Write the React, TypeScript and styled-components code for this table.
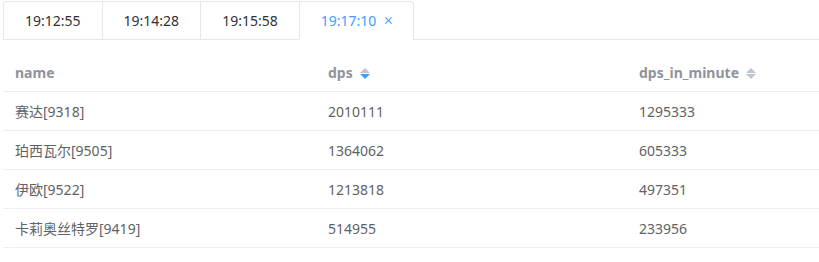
import React, { useState } from "react";
import styled, { createGlobalStyle } from "styled-components";

const GlobalStyle = createGlobalStyle`
  html, body {
    margin: 0;
    padding: 0;
    background: #fff;
    overflow: hidden;
  }
  body {
    font-family: "Noto Sans", "Noto Sans CJK SC", sans-serif;
    font-size: 14px;
    -webkit-font-smoothing: antialiased;
  }
`;

const Page = styled.div`
  padding: 1px 0 0 3px;
`;

const TabsHeader = styled.div`
  display: flex;
  border-bottom: 1px solid #e4e7ed;
  margin-bottom: 14px;
`;

const TabsNav = styled.div`
  display: flex;
  border: 1px solid #e4e7ed;
  border-bottom: none;
  border-radius: 4px 4px 0 0;
  margin-bottom: -1px;
`;

const Tab = styled.div<{ $active?: boolean; $first?: boolean }>`
  display: flex;
  align-items: center;
  height: 37px;
  padding: 0 21px;
  border-left: ${(p) => (p.$first ? "none" : "1px solid #e4e7ed")};
  border-bottom: 1px solid ${(p) => (p.$active ? "#fff" : "transparent")};
  color: ${(p) => (p.$active ? "#409eff" : "#303133")};
  font-size: 14px;
  cursor: pointer;
  user-select: none;
`;

const CloseIcon = styled.span`
  display: inline-flex;
  align-items: center;
  justify-content: center;
  width: 14px;
  height: 14px;
  margin-left: 5px;
  margin-right: -3px;
  color: #409eff;
`;

const Table = styled.div`
  display: flex;
  flex-direction: column;
  color: #606266;
`;

const Row = styled.div<{ $head?: boolean }>`
  display: grid;
  grid-template-columns: 313px 311px 1fr;
  height: ${(p) => (p.$head ? "37px" : "38px")};
  border-bottom: 1px solid #ebeef5;
  color: ${(p) => (p.$head ? "#909399" : "#606266")};
  font-weight: ${(p) => (p.$head ? 700 : 400)};
`;

const Cell = styled.div`
  display: flex;
  align-items: center;
  padding: 0 12px;
  white-space: nowrap;
  overflow: hidden;
`;

const CaretWrap = styled.span`
  display: inline-flex;
  flex-direction: column;
  gap: 1px;
  margin-left: 7px;
  margin-top: 2px;
`;

const Caret = styled.span<{ $dir: "up" | "down"; $on?: boolean }>`
  width: 0;
  height: 0;
  border-left: 5px solid transparent;
  border-right: 5px solid transparent;
  ${(p) =>
    p.$dir === "up"
      ? `border-bottom: 5px solid ${p.$on ? "#409eff" : "#c0c4cc"};`
      : `border-top: 5px solid ${p.$on ? "#409eff" : "#c0c4cc"};`}
`;

const SortIcon = ({ active }: { active?: "asc" | "desc" }) => (
  <CaretWrap>
    <Caret $dir="up" $on={active === "asc"} />
    <Caret $dir="down" $on={active === "desc"} />
  </CaretWrap>
);

const times = ["19:12:55", "19:14:28", "19:15:58", "19:17:10"];

const rows = [
  { name: "赛达[9318]", dps: 2010111, minute: 1295333 },
  { name: "珀西瓦尔[9505]", dps: 1364062, minute: 605333 },
  { name: "伊欧[9522]", dps: 1213818, minute: 497351 },
  { name: "卡莉奥丝特罗[9419]", dps: 514955, minute: 233956 },
];

const App = () => {
  const [active, setActive] = useState(3);

  return (
    <Page>
      <GlobalStyle />
      <TabsHeader>
        <TabsNav>
          {times.map((t, i) => (
            <Tab key={t} $first={i === 0} $active={i === active} onClick={() => setActive(i)}>
              {t}
              {i === active && (
                <CloseIcon>
                  <svg width="9" height="9" viewBox="0 0 10 10">
                    <path d="M1.5 1.5 L8.5 8.5 M8.5 1.5 L1.5 8.5" stroke="currentColor" strokeWidth="1.2" />
                  </svg>
                </CloseIcon>
              )}
            </Tab>
          ))}
        </TabsNav>
      </TabsHeader>
      <Table>
        <Row $head>
          <Cell>name</Cell>
          <Cell>
            dps
            <SortIcon active="desc" />
          </Cell>
          <Cell>
            dps_in_minute
            <SortIcon />
          </Cell>
        </Row>
        {rows.map((r) => (
          <Row key={r.name}>
            <Cell>{r.name}</Cell>
            <Cell>{r.dps}</Cell>
            <Cell>{r.minute}</Cell>
          </Row>
        ))}
      </Table>
    </Page>
  );
};

export default App;
